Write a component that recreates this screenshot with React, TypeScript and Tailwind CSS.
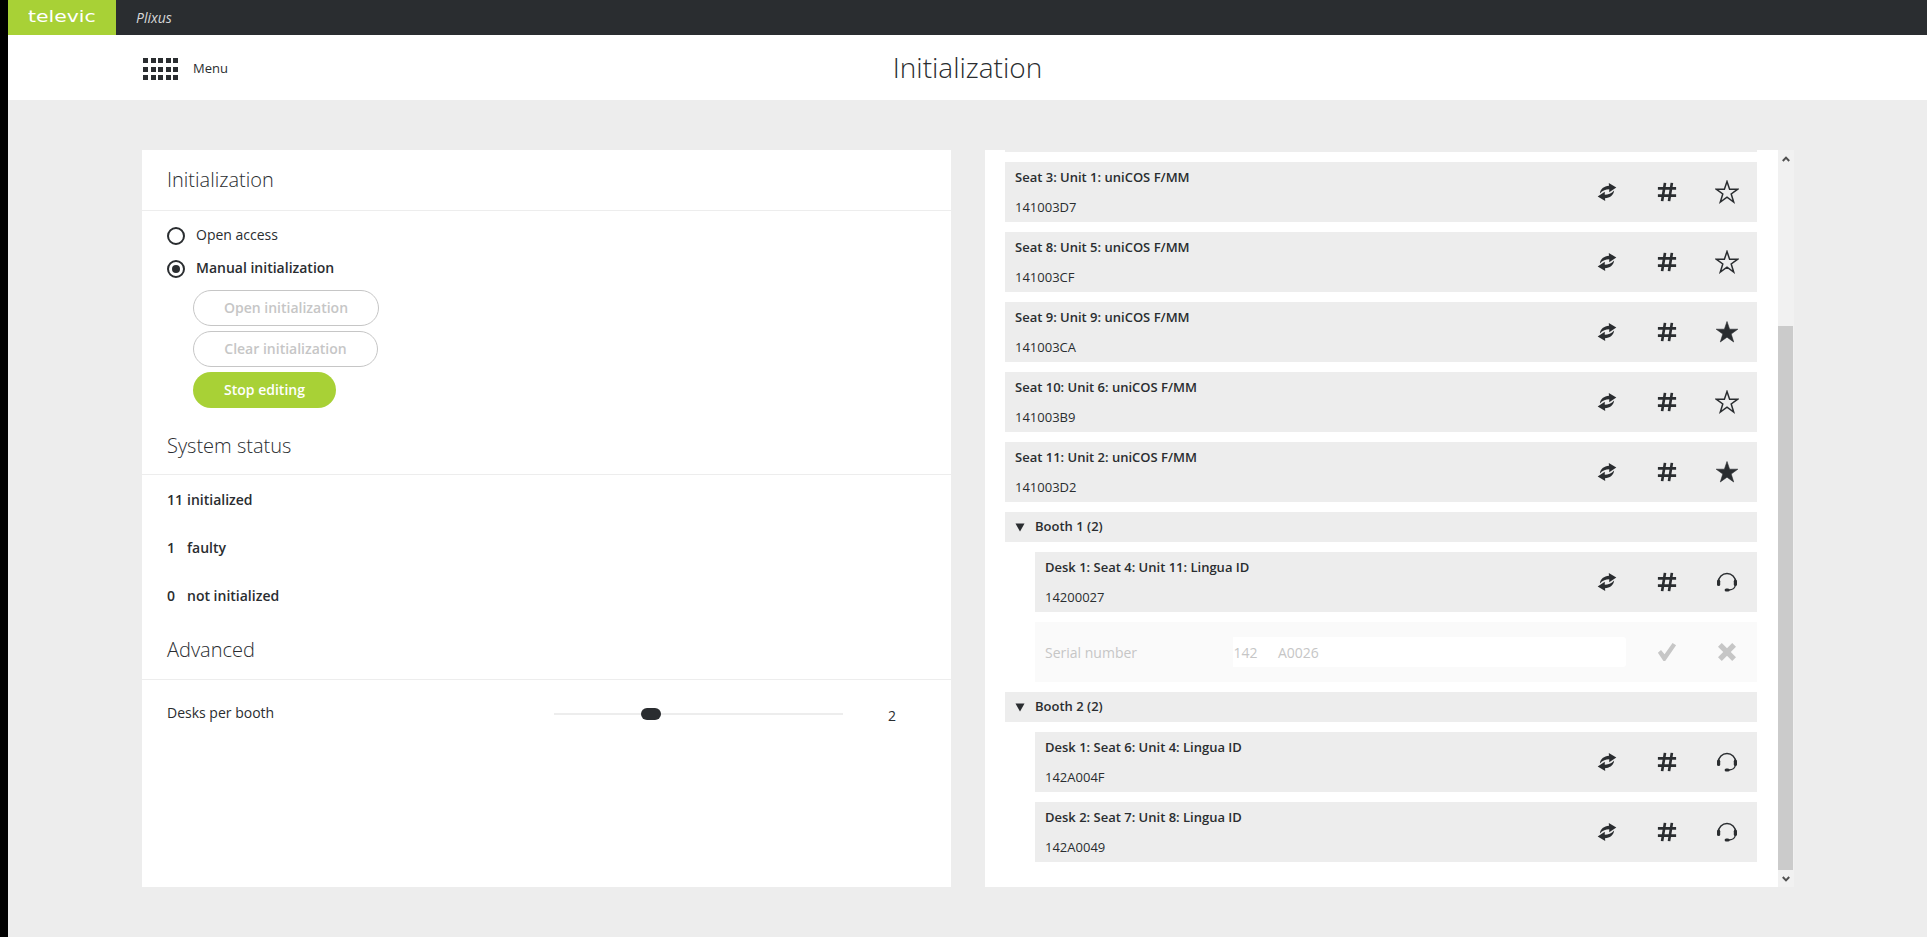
const ink = "#2a2d30";

function SwapIcon() {
  return (
    <svg width="20" height="20" viewBox="0 0 18 18" fill="#2a2d30">
      <path d="M10.6 0.8 L17.4 5 L11 9.2 L11 6.6 C8 6.6 5 7.6 2.6 10.4 C2.8 6.4 6.4 3.6 10.8 3.4 Z" />
      <path d="M7.4 17.2 L0.6 13 L7 8.8 L7 11.4 C10 11.4 13 10.4 15.4 7.6 C15.2 11.6 11.6 14.4 7.2 14.6 Z" />
    </svg>
  );
}

function HashIcon({ color = ink }: { color?: string }) {
  return (
    <svg width="20" height="20" viewBox="0 0 18 18" stroke={color} strokeWidth="2.4" fill="none">
      <path d="M7.2 0.8 L4.6 17.2 M13.4 0.8 L10.8 17.2 M0.8 5.8 L17.2 5.8 M0.8 12.2 L17.2 12.2" />
    </svg>
  );
}

function StarIcon({ filled }: { filled: boolean }) {
  return (
    <svg width="24" height="24" viewBox="0 0 24 24" fill={filled ? "#2a2d30" : "none"} stroke="#2a2d30" strokeWidth={filled ? "0.6" : "1.5"}>
      <path d="M12 1.5 L14.6 9.2 L22.8 9.2 L16.2 14 L18.7 22 L12 17.2 L5.3 22 L7.8 14 L1.2 9.2 L9.4 9.2 Z" />
    </svg>
  );
}

function HeadsetIcon() {
  return (
    <svg width="22" height="22" viewBox="0 0 22 22" fill="none" stroke="#2a2d30">
      <path d="M2.4 11 A8.6 8.6 0 0 1 19.6 11" strokeWidth="1.5" />
      <path d="M19.4 14 C19 17.4 17 18.8 13 19" strokeWidth="1.3" />
      <rect x="1" y="8.6" width="3.2" height="6.4" rx="1.6" fill="#2a2d30" stroke="none" />
      <rect x="17.8" y="8.6" width="3.2" height="6.4" rx="1.6" fill="#2a2d30" stroke="none" />
      <rect x="8.6" y="17.4" width="5" height="3.2" rx="1.6" fill="#2a2d30" stroke="none" />
    </svg>
  );
}

function CheckIcon() {
  return (
    <svg width="20" height="20" viewBox="0 0 18 18" fill="#c6c6c6">
      <path d="M0.8 9.6 L3.6 7.2 L6.8 11 L14 1 L17.2 3 L7.4 17 L5.8 17 Z" />
    </svg>
  );
}

function CrossIcon() {
  return (
    <svg width="20" height="20" viewBox="0 0 18 18" stroke="#c6c6c6" strokeWidth="4.8" fill="none">
      <path d="M2.6 2.6 L15.4 15.4 M15.4 2.6 L2.6 15.4" />
    </svg>
  );
}

function MenuGrid() {
  return (
    <div className="grid grid-cols-[repeat(5,5px)] grid-rows-[repeat(3,5px)] gap-x-[2.5px] gap-y-[3.5px]">
      {Array.from({ length: 15 }).map((_, i) => (
        <span key={i} className="bg-[#2a2d30]" />
      ))}
    </div>
  );
}

function SectionTitle({ children, className }: { children: string; className: string }) {
  return (
    <div className={`flex items-center border-b border-[#ededed] pl-[25px] text-[20px] font-light text-[#2a2d30] ${className}`}>
      {children}
    </div>
  );
}

function Radio({ label, selected }: { label: string; selected?: boolean }) {
  return (
    <div className="flex h-[33px] items-center gap-[11px] pl-[25px]">
      <span className="flex h-[18px] w-[18px] items-center justify-center rounded-full border-2 border-[#2a2d30]">
        {selected && <span className="h-[8px] w-[8px] rounded-full bg-[#2a2d30]" />}
      </span>
      <span className={`mb-[2px] text-[14px] ${selected ? "font-semibold" : ""}`}>{label}</span>
    </div>
  );
}

function OutlineButton({ label, width }: { label: string; width: string }) {
  return (
    <div className={`flex h-[36px] items-center justify-center rounded-full border border-[#c6c6c6] pb-[2px] text-[14px] font-semibold text-[#c6c6c6] ${width}`}>
      {label}
    </div>
  );
}

function Stat({ count, label }: { count: string; label: string }) {
  return (
    <div className="flex h-[48px] items-center pl-[25px] text-[14px] font-semibold">
      <span className="w-[20px]">{count}</span>
      <span>{label}</span>
    </div>
  );
}

function LeftPanel() {
  return (
    <section className="h-[737px] w-[809px] bg-white">
      <SectionTitle className="h-[61px]">Initialization</SectionTitle>
      <div className="pt-[8px]">
        <Radio label="Open access" />
        <Radio label="Manual initialization" selected />
      </div>
      <div className="flex flex-col gap-[5px] pl-[51px] pt-[5px]">
        <OutlineButton label="Open initialization" width="w-[186px]" />
        <OutlineButton label="Clear initialization" width="w-[185px]" />
        <div className="flex h-[36px] w-[143px] items-center justify-center rounded-full bg-[#a8d136] pb-[2px] text-[14px] font-semibold text-white">
          Stop editing
        </div>
      </div>
      <SectionTitle className="mt-[12px] h-[55px] pb-[3px]">System status</SectionTitle>
      <div>
        <Stat count="11" label="initialized" />
        <Stat count="1" label="faulty" />
        <Stat count="0" label="not initialized" />
      </div>
      <div className="pt-[2px]">
        <SectionTitle className="h-[59px]">Advanced</SectionTitle>
      </div>
      <div className="flex h-[68px] items-center pl-[25px] text-[14px]">
        <span className="mb-[3px] w-[387px]">Desks per booth</span>
        <div className="relative h-[2px] w-[289px] bg-[#ededed]">
          <span className="absolute left-[87px] top-[-5px] h-[12px] w-[20px] rounded-full bg-[#2a2d30]" />
        </div>
        <span className="ml-[45px] mt-[2px]">2</span>
      </div>
    </section>
  );
}

function IconCell({ children }: { children: React.ReactNode }) {
  return <div className="flex w-[60px] items-center justify-center">{children}</div>;
}

function Row({ title, serial, icon, indent }: { title: string; serial: string; icon: "star" | "starFilled" | "headset"; indent?: boolean }) {
  return (
    <div className={`flex h-[60px] items-center bg-[#ededed] pl-[10px] ${indent ? "ml-[30px]" : ""}`}>
      <div className="flex-1 text-[13px] leading-[30px]">
        <div className="font-semibold">{title}</div>
        <div>{serial}</div>
      </div>
      <IconCell><SwapIcon /></IconCell>
      <IconCell><HashIcon /></IconCell>
      <IconCell>
        {icon === "headset" ? <HeadsetIcon /> : <StarIcon filled={icon === "starFilled"} />}
      </IconCell>
    </div>
  );
}

function BoothRow({ label }: { label: string }) {
  return (
    <div className="flex h-[30px] items-center bg-[#ededed] pl-[10px] text-[13px] font-semibold">
      <svg width="10" height="9" viewBox="0 0 10 9" fill="#2a2d30" className="mr-[10px]">
        <path d="M0.5 0.5 L9.5 0.5 L5 8.5 Z" />
      </svg>
      {label}
    </div>
  );
}

function SerialRow() {
  return (
    <div className="ml-[30px] flex h-[60px] items-center bg-[#fafafa] pl-[10px] text-[14px] text-[#c6c6c6]">
      <span className="w-[188px]">Serial number</span>
      <span className="flex h-[30px] w-[25px] items-center justify-center bg-white">142</span>
      <span className="flex h-[30px] w-[368px] items-center rounded-r-[3px] bg-white pl-[20px] pt-[1px]">A0026</span>
      <div className="ml-[11px] flex">
        <IconCell><CheckIcon /></IconCell>
        <IconCell><CrossIcon /></IconCell>
      </div>
    </div>
  );
}

function Scrollbar() {
  return (
    <div className="flex h-[737px] w-[16px] flex-col bg-[#f1f1f1]">
      <div className="flex h-[18px] items-center justify-center">
        <svg width="8" height="6" viewBox="0 0 8 6" fill="none" stroke="#505050" strokeWidth="2">
          <path d="M0.8 5 L4 1.6 L7.2 5" />
        </svg>
      </div>
      <div className="mt-[158px] h-[544px] w-[15px] bg-[#cbcbcb]" />
      <div className="flex h-[17px] items-center justify-center">
        <svg width="8" height="6" viewBox="0 0 8 6" fill="none" stroke="#505050" strokeWidth="2">
          <path d="M0.8 1 L4 4.4 L7.2 1" />
        </svg>
      </div>
    </div>
  );
}

function RightPanel() {
  return (
    <section className="flex h-[737px] w-[793px] flex-col bg-white pl-[20px] pr-[21px]">
      <div className="h-[2px] bg-[#ededed]" />
      <div className="flex flex-col gap-[10px] pt-[10px]">
        <Row title="Seat 3: Unit 1: uniCOS F/MM" serial="141003D7" icon="star" />
        <Row title="Seat 8: Unit 5: uniCOS F/MM" serial="141003CF" icon="star" />
        <Row title="Seat 9: Unit 9: uniCOS F/MM" serial="141003CA" icon="starFilled" />
        <Row title="Seat 10: Unit 6: uniCOS F/MM" serial="141003B9" icon="star" />
        <Row title="Seat 11: Unit 2: uniCOS F/MM" serial="141003D2" icon="starFilled" />
        <BoothRow label="Booth 1 (2)" />
        <Row title="Desk 1: Seat 4: Unit 11: Lingua ID" serial="14200027" icon="headset" indent />
        <SerialRow />
        <BoothRow label="Booth 2 (2)" />
        <Row title="Desk 1: Seat 6: Unit 4: Lingua ID" serial="142A004F" icon="headset" indent />
        <Row title="Desk 2: Seat 7: Unit 8: Lingua ID" serial="142A0049" icon="headset" indent />
      </div>
    </section>
  );
}

export default function App() {
  return (
    <div className="flex h-[937px] overflow-hidden bg-black font-['Open_Sans',sans-serif] text-[#2a2d30]">
      <div className="w-[8px] shrink-0" />
      <div className="flex flex-1 flex-col bg-[#ededed]">
        <header className="flex h-[35px] items-center bg-[#2a2d30]">
          <div className="flex h-full w-[108px] items-center justify-center bg-[#a8d136] font-['DejaVu_Sans',sans-serif] text-[15px] text-white">
            <span className="scale-x-[1.36]">televic</span>
          </div>
          <span className="ml-[20px] text-[14px] italic text-[#d8d8d8]">Plixus</span>
        </header>
        <div className="relative flex h-[65px] items-center justify-center bg-white">
          <div className="absolute left-[135px] top-[23px] flex items-center gap-[15px] text-[13px]">
            <MenuGrid />
            <span>Menu</span>
          </div>
          <h1 className="pb-[2px] text-[28px] font-light">Initialization</h1>
        </div>
        <main className="flex pl-[134px] pt-[50px]">
          <LeftPanel />
          <div className="w-[34px]" />
          <RightPanel />
          <Scrollbar />
        </main>
      </div>
    </div>
  );
}
